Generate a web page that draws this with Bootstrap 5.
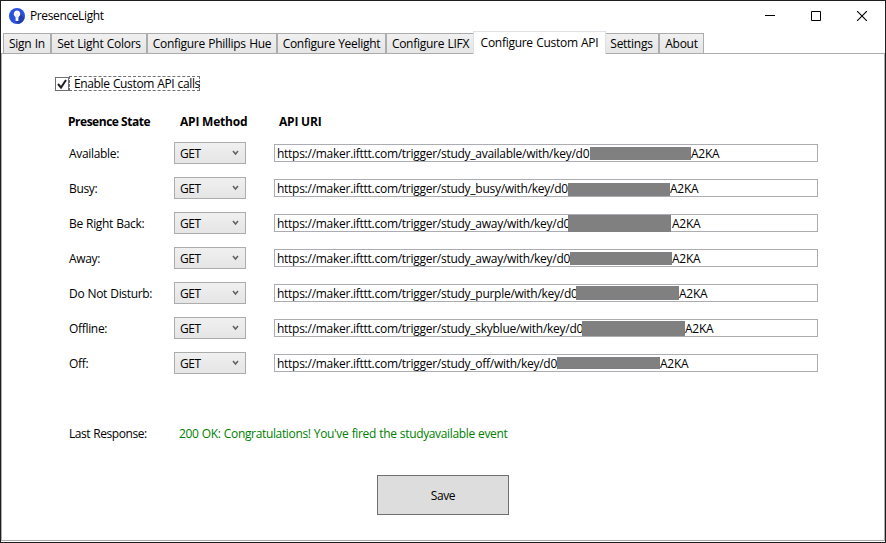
<!DOCTYPE html>
<html lang="en">
<head>
<meta charset="utf-8">
<title>PresenceLight</title>
<link rel="stylesheet" href="https://cdn.jsdelivr.net/npm/bootstrap@5.3.0/dist/css/bootstrap.min.css">
<style>
  body { font: 12px/18px "Open Sans", sans-serif; color: #000; letter-spacing: -.27px; white-space: nowrap; }
  .app-window { height: 543px; border: 1px solid #1f1f1f; background: #fff; }
  .title-bar { height: 30px; padding-left: 8px; }
  .app-name { margin-left: 5px; letter-spacing: -.38px; }
  .caption-btn { width: 46px; height: 30px; padding: 0; border: 0; background: none; display: flex; align-items: center; justify-content: center; }
  .app-tabs { height: 23px; padding-left: 2px; border: 0; position: relative; z-index: 1; }
  .app-tabs .nav-link { height: 21px; padding: 1px 0 0; border: 1px solid #acacac; border-radius: 0; color: #000; text-align: center;
    background: linear-gradient(#f0f0f0, #e5e5e5); letter-spacing: -.28px; word-spacing: .5px; line-height: 18px; margin: 0; }
  .app-tabs .nav-link.active { height: 23px; border-bottom: 0; background: #fff; color: #000; padding-top: 2px; }
  .t-sign { width: 48px; } .t-colors { width: 96px; } .t-hue { width: 130px; } .t-yee { width: 109px; }
  .t-lifx { width: 87px; } .t-custom { width: 133px; } .t-set { width: 53px; } .t-about { width: 45px; }
  .app-tabs .t-lifx .nav-link { border-right: 0; padding-left: 1px; }
  .app-tabs .t-set .nav-link { border-left: 0; padding-right: 1px; }
  .app-panel { height: 488px; margin-top: -1px; border: 1px solid #acacac; padding: 22px 0 0 53px; }
  .check-box { width: 14px; height: 14px; border: 1px solid #707070; }
  .check-label { width: 131px; height: 15px; border: 1px dashed #707070; line-height: 14px; padding-left: 4px; letter-spacing: -.36px; word-spacing: .5px; }
  .state-grid { display: grid; grid-template-columns: 105px 100px 544px; padding-left: 14px; margin-top: 22px; }
  .state-grid > * { height: 35px; }
  .state-grid .head { height: 26px; font-weight: 700; letter-spacing: -.2px; }
  .state-grid .head-first { letter-spacing: -.48px; margin-left: -1px; }
  .head-method { padding-left: 6px; } .head-uri { padding-left: 5px; }
  .state-name { padding-top: 6px; line-height: 18px; letter-spacing: -.32px; word-spacing: .4px; }
  .method { width: 72px; height: 22px; margin-top: 3px; padding: 0 6px 0 5px; border: 1px solid #acacac; border-radius: 0;
    background: linear-gradient(#f0f0f0, #e5e5e5); line-height: 20px; letter-spacing: -.5px; }
  .method span { padding-top: 1px; }
  .uri { height: 18px; margin-top: 5px; border: 1px solid #abadb3; padding-left: 2px; line-height: 17px; }
  .uri-start { width: var(--start); flex: none; }
  .mask { background: #808080; width: 103px; flex: none; }
  .r1 { --start: 313px; } .r1 .mask { width: 101px; height: 13px; margin-top: 2px; }
  .r2 { --start: 291px; } .r2 .mask { width: 102px; height: 13px; margin-top: 3px; }
  .r3 { --start: 291px; } .r3 .mask { height: 17px; margin: 0 1px 0 0; }
  .r4 { --start: 293px; } .r4 .mask { width: 102px; height: 13px; margin-top: 2px; }
  .r5 { --start: 299px; } .r5 .mask { height: 14px; margin-top: 1px; }
  .r6 { --start: 305px; } .r6 .mask { height: 15px; margin-top: 1px; }
  .r7 { --start: 280px; } .r7 .mask { height: 12px; margin-top: 2px; }
  .response { padding-left: 14px; margin-top: 41px; }
  .response-name { width: 110px; letter-spacing: -.44px; word-spacing: .4px; }
  .response-text { color: #008000; letter-spacing: -.35px; word-spacing: .5px; }
  .save-btn { width: 132px; height: 40px; margin: 32px 0 0 322px; padding: 1px 0 0; border: 1px solid #707070; border-radius: 0; background: #ddd; font-size: 12px; color: #000; letter-spacing: -.4px; display: block; line-height: 37px; }
</style>
</head>
<body class="overflow-hidden">
<div class="app-window">
  <header class="title-bar d-flex align-items-center">
    <svg width="16" height="16" viewBox="0 0 16 16"><circle cx="8" cy="8" r="8" fill="#2b52dd"/><path d="M9 3l6.500 7A8 8 0 0 1 9 15.900L6.500 13z" fill="#2140ae"/><path d="M8 2.500a3.300 3.300 0 0 0-2 5.900l.6 1.100V13h2.800V9.500l.6-1.100A3.300 3.300 0 0 0 8 2.500z" fill="#fff"/><path d="M7.500 6h1v4h-1z" fill="#d5dcf5"/></svg>
    <span class="app-name">PresenceLight</span>
    <div class="d-flex ms-auto">
      <button class="caption-btn" aria-label="Minimize"><svg width="10" height="10"><path d="M0 4.500h10" stroke="#000"/></svg></button>
      <button class="caption-btn" aria-label="Maximize"><svg width="10" height="10"><path d="M.5.5h9v9h-9z" fill="none" stroke="#000"/></svg></button>
      <button class="caption-btn" aria-label="Close"><svg width="10" height="10"><path d="M0 0l10 10M10 0L0 10" stroke="#000" stroke-width="1.100"/></svg></button>
    </div>
  </header>
  <ul class="nav nav-tabs app-tabs flex-nowrap align-items-end">
    <li class="nav-item t-sign"><a class="nav-link">Sign In</a></li>
    <li class="nav-item t-colors"><a class="nav-link">Set Light Colors</a></li>
    <li class="nav-item t-hue"><a class="nav-link">Configure Phillips Hue</a></li>
    <li class="nav-item t-yee"><a class="nav-link">Configure Yeelight</a></li>
    <li class="nav-item t-lifx"><a class="nav-link">Configure LIFX</a></li>
    <li class="nav-item t-custom"><a class="nav-link active">Configure Custom API</a></li>
    <li class="nav-item t-set"><a class="nav-link">Settings</a></li>
    <li class="nav-item t-about"><a class="nav-link">About</a></li>
  </ul>
  <main class="app-panel">
    <div class="d-flex align-items-center">
      <div class="check-box d-flex"><svg width="12" height="12"><path d="M2 6l3 3.500L10 2" fill="none" stroke="#212121" stroke-width="2"/></svg></div>
      <div class="check-label">Enable Custom API calls</div>
    </div>
    <div class="state-grid">
      <div class="head head-first">Presence State</div><div class="head head-method">API Method</div><div class="head head-uri">API URI</div>

      <div class="state-name">Available:</div>
      <div><div class="method d-flex justify-content-between align-items-center"><span>GET</span><svg width="7" height="6"><path d="M1 1l2.500 3L6 1" fill="none" stroke="#606060" stroke-width="1.500"/></svg></div></div>
      <div><div class="uri r1 d-flex"><span class="uri-start">https://maker.ifttt.com/trigger/study_available/with/key/d0</span><span class="mask"></span><span>A2KA</span></div></div>

      <div class="state-name">Busy:</div>
      <div><div class="method d-flex justify-content-between align-items-center"><span>GET</span><svg width="7" height="6"><path d="M1 1l2.500 3L6 1" fill="none" stroke="#606060" stroke-width="1.500"/></svg></div></div>
      <div><div class="uri r2 d-flex"><span class="uri-start">https://maker.ifttt.com/trigger/study_busy/with/key/d0</span><span class="mask"></span><span>A2KA</span></div></div>

      <div class="state-name">Be Right Back:</div>
      <div><div class="method d-flex justify-content-between align-items-center"><span>GET</span><svg width="7" height="6"><path d="M1 1l2.500 3L6 1" fill="none" stroke="#606060" stroke-width="1.500"/></svg></div></div>
      <div><div class="uri r3 d-flex"><span class="uri-start">https://maker.ifttt.com/trigger/study_away/with/key/d0</span><span class="mask"></span><span>A2KA</span></div></div>

      <div class="state-name">Away:</div>
      <div><div class="method d-flex justify-content-between align-items-center"><span>GET</span><svg width="7" height="6"><path d="M1 1l2.500 3L6 1" fill="none" stroke="#606060" stroke-width="1.500"/></svg></div></div>
      <div><div class="uri r4 d-flex"><span class="uri-start">https://maker.ifttt.com/trigger/study_away/with/key/d0</span><span class="mask"></span><span>A2KA</span></div></div>

      <div class="state-name">Do Not Disturb:</div>
      <div><div class="method d-flex justify-content-between align-items-center"><span>GET</span><svg width="7" height="6"><path d="M1 1l2.500 3L6 1" fill="none" stroke="#606060" stroke-width="1.500"/></svg></div></div>
      <div><div class="uri r5 d-flex"><span class="uri-start">https://maker.ifttt.com/trigger/study_purple/with/key/d0</span><span class="mask"></span><span>A2KA</span></div></div>

      <div class="state-name">Offline:</div>
      <div><div class="method d-flex justify-content-between align-items-center"><span>GET</span><svg width="7" height="6"><path d="M1 1l2.500 3L6 1" fill="none" stroke="#606060" stroke-width="1.500"/></svg></div></div>
      <div><div class="uri r6 d-flex"><span class="uri-start">https://maker.ifttt.com/trigger/study_skyblue/with/key/d0</span><span class="mask"></span><span>A2KA</span></div></div>

      <div class="state-name">Off:</div>
      <div><div class="method d-flex justify-content-between align-items-center"><span>GET</span><svg width="7" height="6"><path d="M1 1l2.500 3L6 1" fill="none" stroke="#606060" stroke-width="1.500"/></svg></div></div>
      <div><div class="uri r7 d-flex"><span class="uri-start">https://maker.ifttt.com/trigger/study_off/with/key/d0</span><span class="mask"></span><span>A2KA</span></div></div>
    </div>
    <div class="response d-flex">
      <div class="response-name">Last Response:</div>
      <div class="response-text">200 OK: Congratulations! You've fired the studyavailable event</div>
    </div>
    <button class="btn save-btn">Save</button>
  </main>
</div>
<script src="https://cdn.jsdelivr.net/npm/bootstrap@5.3.0/dist/js/bootstrap.bundle.min.js"></script>
</body>
</html>
